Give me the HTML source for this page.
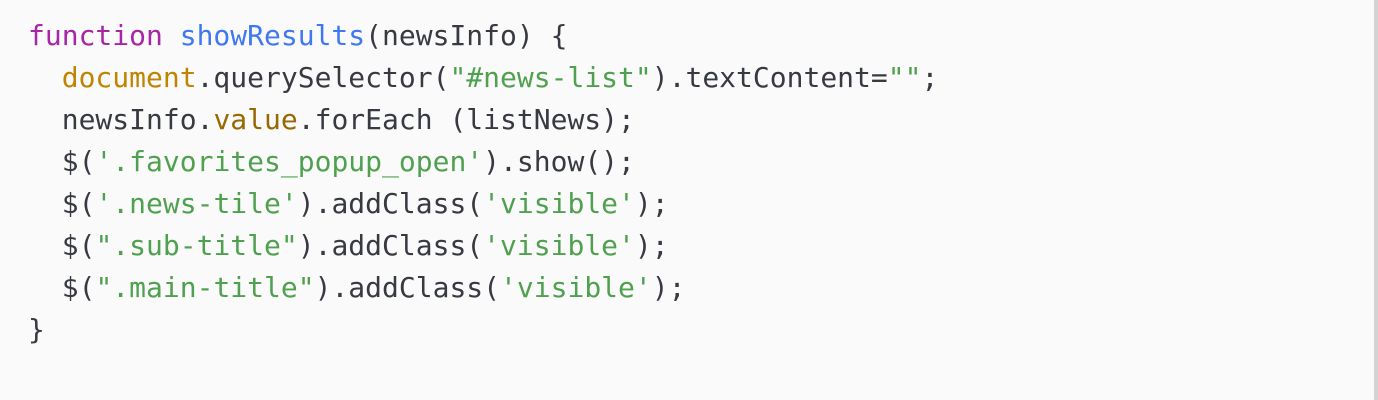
<!DOCTYPE html>
<html><head><style>
html,body{margin:0;padding:0;width:1378px;height:400px;background:#fafafa;overflow:hidden}
.b{position:absolute;left:1374px;top:0;width:4px;height:400px;background:#d3d3d3}
pre{position:absolute;left:28px;top:15px;margin:0;font-family:"DejaVu Sans Mono","Liberation Mono",monospace;font-size:28px;line-height:42px;color:#383a42}
.k{color:#a626a4}.f{color:#4078f2}.o{color:#c18401}.v{color:#986801}.s{color:#50a14f}
</style></head><body>
<pre><span class="k">function</span> <span class="f">showResults</span>(newsInfo) {
  <span class="o">document</span>.querySelector(<span class="s">"#news-list"</span>).textContent=<span class="s">""</span>;
  newsInfo.<span class="v">value</span>.forEach (listNews);
  $(<span class="s">'.favorites_popup_open'</span>).show();
  $(<span class="s">'.news-tile'</span>).addClass(<span class="s">'visible'</span>);
  $(<span class="s">".sub-title"</span>).addClass(<span class="s">'visible'</span>);
  $(<span class="s">".main-title"</span>).addClass(<span class="s">'visible'</span>);
}</pre>
<div class="b"></div>
</body></html>
